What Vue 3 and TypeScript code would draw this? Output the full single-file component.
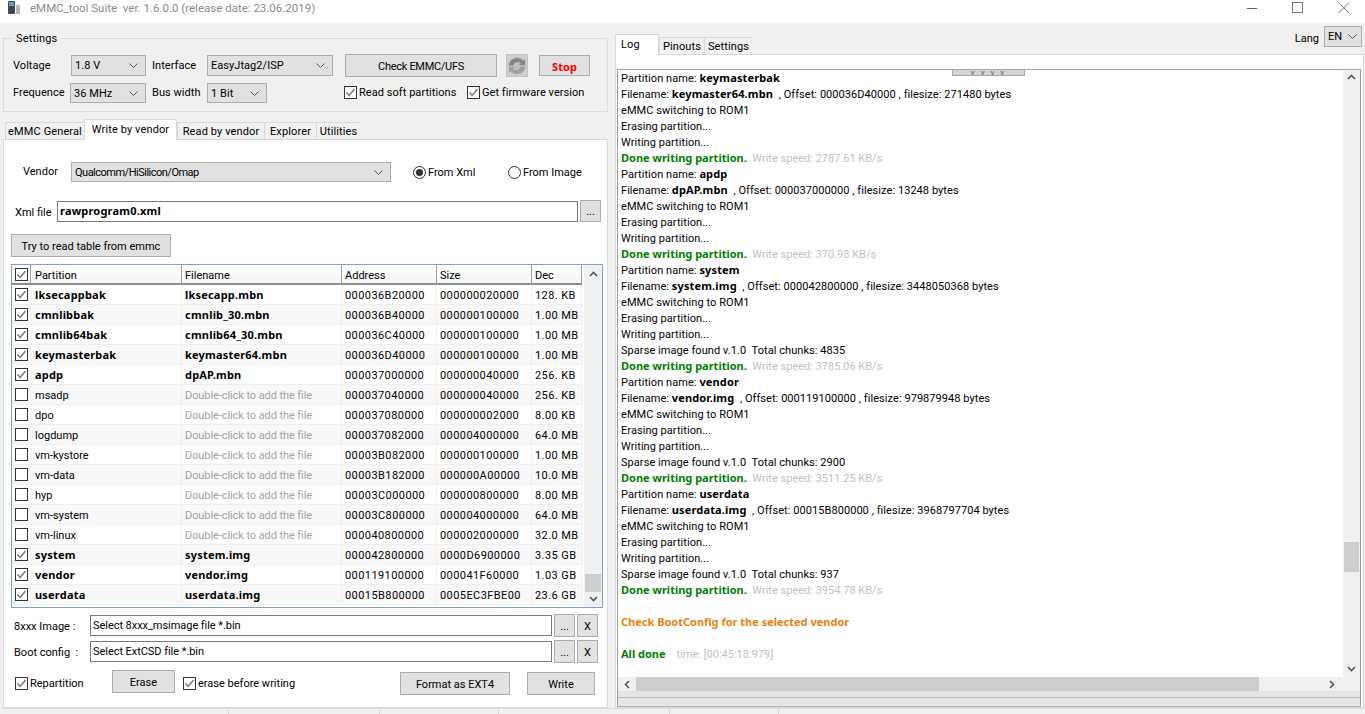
<script setup lang="ts">
interface Row { p: string; f: string; a: string; s: string; d: string; on: boolean }
const hint = 'Double-click to add the file'
const rows: Row[] = [
  { p: 'lksecappbak', f: 'lksecapp.mbn', a: '000036B20000', s: '000000020000', d: '128. KB', on: true },
  { p: 'cmnlibbak', f: 'cmnlib_30.mbn', a: '000036B40000', s: '000000100000', d: '1.00 MB', on: true },
  { p: 'cmnlib64bak', f: 'cmnlib64_30.mbn', a: '000036C40000', s: '000000100000', d: '1.00 MB', on: true },
  { p: 'keymasterbak', f: 'keymaster64.mbn', a: '000036D40000', s: '000000100000', d: '1.00 MB', on: true },
  { p: 'apdp', f: 'dpAP.mbn', a: '000037000000', s: '000000040000', d: '256. KB', on: true },
  { p: 'msadp', f: hint, a: '000037040000', s: '000000040000', d: '256. KB', on: false },
  { p: 'dpo', f: hint, a: '000037080000', s: '000000002000', d: '8.00 KB', on: false },
  { p: 'logdump', f: hint, a: '000037082000', s: '000004000000', d: '64.0 MB', on: false },
  { p: 'vm-kystore', f: hint, a: '00003B082000', s: '000000100000', d: '1.00 MB', on: false },
  { p: 'vm-data', f: hint, a: '00003B182000', s: '000000A00000', d: '10.0 MB', on: false },
  { p: 'hyp', f: hint, a: '00003C000000', s: '000000800000', d: '8.00 MB', on: false },
  { p: 'vm-system', f: hint, a: '00003C800000', s: '000004000000', d: '64.0 MB', on: false },
  { p: 'vm-linux', f: hint, a: '000040800000', s: '000002000000', d: '32.0 MB', on: false },
  { p: 'system', f: 'system.img', a: '000042800000', s: '0000D6900000', d: '3.35 GB', on: true },
  { p: 'vendor', f: 'vendor.img', a: '000119100000', s: '000041F60000', d: '1.03 GB', on: true },
  { p: 'userdata', f: 'userdata.img', a: '00015B800000', s: '0005EC3FBE00', d: '23.6 GB', on: true }
]
type Seg = [string, string]
const block = (name: string, file: string, off: string, size: string, speed: string, sparse?: string): Seg[][] => {
  const l: Seg[][] = [
    [['r', 'Partition name: '], ['b', name]],
    [['r', 'Filename: '], ['b', file], ['r', `  , Offset: ${off} , filesize: ${size} bytes`]],
    [['r', 'eMMC switching to ROM1']],
    [['r', 'Erasing partition...']],
    [['r', 'Writing partition...']]
  ]
  if (sparse) l.push([['r', `Sparse image found v.1.0  Total chunks: ${sparse}`]])
  l.push([['g', 'Done writing partition.'], ['m', `  Write speed: ${speed} KB/s`]])
  return l
}
const log: Seg[][] = [
  ...block('keymasterbak', 'keymaster64.mbn', '000036D40000', '271480', '2787.61'),
  ...block('apdp', 'dpAP.mbn', '000037000000', '13248', '370.98'),
  ...block('system', 'system.img', '000042800000', '3448050368', '3785.06', '4835'),
  ...block('vendor', 'vendor.img', '000119100000', '979879948', '3511.25', '2900'),
  ...block('userdata', 'userdata.img', '00015B800000', '3968797704', '3954.78', '937'),
  [['r', '\u00a0']],
  [['o', 'Check BootConfig for the selected vendor']],
  [['r', '\u00a0']],
  [['g', 'All done'], ['m', '    time: [00:45:18:979]']]
]
const leftTabs = [
  { t: 'eMMC General', w: 79 }, { t: 'Write by vendor', w: 93, on: true }, { t: 'Read by vendor', w: 87 },
  { t: 'Explorer', w: 52 }, { t: 'Utilities', w: 44 }
]
const rightTabs = [{ t: 'Log', w: 44, on: true }, { t: 'Pinouts', w: 45 }, { t: 'Settings', w: 48 }]
const tick = [229, 151, 119, 171, 109]
</script>

<template>
  <div class="app">
    <svg class="defs" width="0" height="0">
      <symbol id="on" viewBox="0 0 13 13">
        <rect x=".5" y=".5" width="12" height="12" fill="#fff" stroke="#333" />
        <path d="M2.5 6.5 5.2 9.5 10.5 3" fill="none" stroke="#777" stroke-width="1.4" />
      </symbol>
      <symbol id="off" viewBox="0 0 13 13">
        <rect x=".5" y=".5" width="12" height="12" fill="#fff" stroke="#333" />
      </symbol>
      <symbol id="caret" viewBox="0 0 9 5">
        <path d="M.5.5 4.5 4.5 8.5.5" fill="none" stroke="#555" />
      </symbol>
    </svg>

    <header class="title">
      <svg class="appicon" width="14" height="15" viewBox="0 0 14 15">
        <rect x="1" y="1" width="7" height="13" rx="1" fill="#3d4a57" />
        <rect x="2" y="2" width="5" height="4" fill="#6d9cc4" />
        <rect x="9" y="5" width="4" height="9" fill="#b4b8bc" />
      </svg>
      <span>eMMC_tool Suite&nbsp; ver. 1.6.0.0 (release date: 23.06.2019)</span>
      <div class="winbtns">
        <svg width="12" height="12" viewBox="0 0 12 12"><path d="M1 6.5H11" stroke="#666" /></svg>
        <svg width="12" height="12" viewBox="0 0 12 12"><rect x=".5" y=".5" width="10" height="10" fill="none" stroke="#777" /></svg>
        <svg width="12" height="12" viewBox="0 0 12 12"><path d="M.5.5 11 11M11 .5.5 11" stroke="#777" fill="none" /></svg>
      </div>
    </header>

    <main class="main">
      <section class="left">
        <fieldset class="settings">
          <legend>Settings</legend>
          <div class="setgrid">
            <label>Voltage</label>
            <div class="sel"><span>1.8 V</span><svg class="car"><use href="#caret" /></svg></div>
            <label class="gapl">Interface</label>
            <div class="sel"><span>EasyJtag2/ISP</span><svg class="car"><use href="#caret" /></svg></div>
            <div class="btn check">Check EMMC/UFS</div>
            <div class="refresh">
              <svg width="20" height="20" viewBox="0 0 20 20">
                <circle cx="10" cy="10" r="9" fill="#bdbdbd" />
                <path d="M2 9A8 8 0 0 1 16 5L18 3V9H12L14 7A5 5 0 0 0 6 10Z" fill="#858585" />
                <path d="M18 11A8 8 0 0 1 4 15L2 17V11H8L6 13A5 5 0 0 0 14 10Z" fill="#a0a0a0" />
              </svg>
            </div>
            <div class="btn stop">Stop</div>

            <label class="low">Frequence</label>
            <div class="sel freq"><span>36 MHz</span><svg class="car"><use href="#caret" /></svg></div>
            <label class="gapl low">Bus width</label>
            <div class="sel bus"><span>1 Bit</span><svg class="car"><use href="#caret" /></svg></div>
            <div class="checks">
              <span class="chk first"><svg class="box"><use href="#on" /></svg>Read soft partitions</span>
              <span class="chk"><svg class="box"><use href="#on" /></svg>Get firmware version</span>
            </div>
          </div>
        </fieldset>

        <nav class="tabs ltabs">
          <div v-for="t in leftTabs" :key="t.t" class="tab" :class="{ on: t.on }" :style="{ width: t.w + 'px' }">{{ t.t }}</div>
        </nav>

        <div class="panel lpanel">
          <div class="vendor">
            <label class="vlabel">Vendor</label>
            <div class="sel vsel"><span>Qualcomm/HiSilicon/Omap</span><svg class="car"><use href="#caret" /></svg></div>
            <span class="radio r1"><i class="dot on"></i>From Xml</span>
            <span class="radio r2"><i class="dot"></i>From Image</span>
          </div>
          <div class="xml">
            <label class="xlabel">Xml file</label>
            <div class="field bold">rawprogram0.xml</div>
            <div class="btn mini">...</div>
          </div>
          <div class="btn tryb">Try to read table from emmc</div>

          <div class="table">
            <div class="list">
              <div class="tr head">
                <div class="td cbc"><svg class="box"><use href="#on" /></svg></div>
                <div class="td">Partition</div><div class="td">Filename</div>
                <div class="td">Address</div><div class="td">Size</div><div class="td">Dec</div>
              </div>
              <div v-for="r in rows" :key="r.p" class="tr">
                <div class="td cbc"><svg class="box"><use :href="r.on ? '#on' : '#off'" /></svg></div>
                <div class="td" :class="{ bold: r.on }">{{ r.p }}</div>
                <div class="td" :class="r.on ? 'bold' : 'hint'">{{ r.f }}</div>
                <div class="td num">{{ r.a }}</div><div class="td num">{{ r.s }}</div><div class="td num">{{ r.d }}</div>
              </div>
            </div>
            <div class="vbar tbar">
              <svg class="arrow" viewBox="0 0 9 6"><path d="M1 5 4.5 1.5 8 5" fill="none" stroke="#555" stroke-width="1.6" /></svg>
              <div class="tthumb"></div>
              <svg class="arrow" viewBox="0 0 9 6"><path d="M1 1 4.5 4.5 8 1" fill="none" stroke="#555" stroke-width="1.6" /></svg>
            </div>
          </div>

          <div class="filerow">
            <label class="flabel">8xxx Image :</label>
            <div class="field plain">Select 8xxx_msimage file *.bin</div>
            <div class="btn mini">...</div><div class="btn mini">X</div>
          </div>
          <div class="filerow second">
            <label class="flabel">Boot config&nbsp; :</label>
            <div class="field plain">Select ExtCSD file *.bin</div>
            <div class="btn mini">...</div><div class="btn mini">X</div>
          </div>

          <div class="actions">
            <span class="chk rep"><svg class="box"><use href="#on" /></svg>Repartition</span>
            <div class="btn erase">Erase</div>
            <span class="chk ebw"><svg class="box"><use href="#on" /></svg>erase before writing</span>
            <div class="btn fmt">Format as EXT4</div>
            <div class="btn write">Write</div>
          </div>
        </div>
      </section>

      <section class="right">
        <nav class="tabs rtabs">
          <div v-for="t in rightTabs" :key="t.t" class="tab" :class="{ on: t.on }" :style="{ width: t.w + 'px' }">{{ t.t }}</div>
          <div class="lang">
            <label>Lang</label>
            <div class="sel lsel"><span>EN</span><svg class="car"><use href="#caret" /></svg></div>
          </div>
        </nav>
        <div class="panel rpanel">
          <div class="logbox">
            <div class="handle">v v v v</div>
            <div class="logmain">
              <div class="logtext">
                <div v-for="(l, i) in log" :key="i" class="ln">
                  <span v-for="(s, j) in l" :key="j" :class="s[0]">{{ s[1] }}</span>
                </div>
              </div>
              <div class="vbar lbar">
                <svg class="arrow" viewBox="0 0 9 6"><path d="M1 5 4.5 1.5 8 5" fill="none" stroke="#555" stroke-width="1.6" /></svg>
                <div class="lthumb"></div>
                <svg class="arrow" viewBox="0 0 9 6"><path d="M1 1 4.5 4.5 8 1" fill="none" stroke="#555" stroke-width="1.6" /></svg>
              </div>
            </div>
            <div class="hbar">
              <svg class="harrow" viewBox="0 0 6 9"><path d="M5 1 1.5 4.5 5 8" fill="none" stroke="#555" stroke-width="1.6" /></svg>
              <div class="hthumb"></div>
              <svg class="harrow next" viewBox="0 0 6 9"><path d="M1 1 4.5 4.5 1 8" fill="none" stroke="#555" stroke-width="1.6" /></svg>
            </div>
            <div class="strip"></div>
          </div>
        </div>
      </section>
    </main>

    <footer class="status">
      <div v-for="(w, i) in tick" :key="i" class="cell" :style="{ width: w + 'px' }"></div>
    </footer>
  </div>
</template>

<style>
html, body { margin: 0; overflow: hidden; }
</style>

<style scoped>
.app { width: 1365px; height: 714px; display: flex; flex-direction: column; background: #f0f0f0; overflow: hidden; font: 11px/13px Roboto, "Noto Sans", sans-serif; color: #000; }
.defs { position: absolute; }
.title { height: 23px; flex: none; background: #fff; display: flex; align-items: center; color: #8b8b8b; font-size: 11.5px; padding: 0 0 7px 7px; box-sizing: border-box; }
.appicon { margin-right: 9px; margin-top: -1px; }
.winbtns { margin-left: auto; display: flex; gap: 34px; padding-right: 15px; margin-top: -1px; }
.main { height: 685px; flex: none; display: flex; padding: 9px 0 0 3px; box-sizing: border-box; gap: 7px; }
.left { width: 605px; display: flex; flex-direction: column; }
.settings { margin: 0; padding: 10px 0 0 9px; border: 1px solid #dcdcdc; height: 80px; box-sizing: border-box; min-width: 0; }
.settings legend { margin-left: -1px; padding: 0 4px; line-height: 13px; letter-spacing: .15px; }
.setgrid { display: grid; grid-template-columns: 58px 75px 61px 126px 152px 22px 51px; grid-template-rows: 21px 20px; row-gap: 7px; align-items: center; letter-spacing: .05px; }
.setgrid label.low { margin-bottom: 2px; }
.gapl { margin-left: 6px; }
.sel { height: 100%; min-height: 20px; box-sizing: border-box; background: #e1e1e1; border: 1px solid #adadad; display: flex; align-items: center; padding: 0 5px 0 3px; justify-content: space-between; }
.car { width: 9px; height: 5px; flex: none; margin-right: 2px; }
.freq { margin-left: -1px; }
.bus { width: 60px; }
.btn { background: #e1e1e1; border: 1px solid #adadad; box-sizing: border-box; display: flex; align-items: center; justify-content: center; padding-top: 1px; }
.check { height: 23px; margin-left: 12px; margin-right: -12px; letter-spacing: -.3px; }
.refresh { width: 22px; height: 23px; background: #cfcfcf; border: 1px solid #c4c4c4; box-sizing: border-box; display: flex; align-items: center; justify-content: center; margin-left: 21px; }
.stop { color: #f00; font-weight: 700; font-family: "Noto Sans", sans-serif; height: 21px; width: 51px; margin-left: 32px; }
.checks { grid-column: 5 / 8; display: flex; margin-left: 11px; margin-bottom: 1px; }
.first { width: 123px; flex: none; }
.chk { display: inline-flex; align-items: center; gap: 2px; white-space: nowrap; flex: none; }
.box { width: 13px; height: 13px; flex: none; display: block; }
.tabs { display: flex; align-items: flex-end; }
.ltabs { height: 21px; margin-top: 7px; padding-left: 2px; margin-bottom: -1px; position: relative; z-index: 1; }
.tab { height: 18px; box-sizing: border-box; background: #f0f0f0; border: 1px solid #d9d9d9; border-right-width: 0; text-align: center; line-height: 18px; letter-spacing: .12px; }
.tab.on { height: 21px; background: #fff; border-right-width: 1px; border-bottom: 0; line-height: 19px; }
.rtabs .tab.on { text-align: left; padding-left: 5px; }
.panel { background: #fff; border: 1px solid #d9d9d9; box-sizing: border-box; }
.lpanel { height: 569px; padding: 22px 0 0 7px; display: flex; flex-direction: column; }
.vendor { height: 20px; display: flex; align-items: center; }
.vlabel { width: 48px; padding-left: 12px; flex: none; margin-bottom: 2px; }
.vsel { width: 320px; flex: none; letter-spacing: -.5px; }
.radio { display: inline-flex; align-items: center; gap: 2px; }
.r1 { margin-left: 22px; width: 95px; }
.dot { width: 13px; height: 13px; border: 1px solid #333; border-radius: 50%; box-sizing: border-box; position: relative; display: block; background: #fff; }
.dot.on::after { content: ""; position: absolute; inset: 2px; border-radius: 50%; background: #333; }
.xml { height: 22px; margin-top: 18px; display: flex; align-items: center; }
.xlabel { width: 46px; padding: 2px 0 0 4px; box-sizing: border-box; flex: none; }
.field { height: 21px; box-sizing: border-box; border: 1px solid #7a7a7a; background: #fff; flex: none; width: 521px; display: flex; align-items: center; padding: 0 2px 2px; }
.plain { padding-bottom: 0; letter-spacing: -.05px; }
.bold { font-weight: 700; font-family: "Noto Sans", sans-serif; letter-spacing: .2px; }
.mini { width: 21px; height: 22px; margin-left: 2px; flex: none; }
.tryb { width: 160px; height: 23px; margin-top: 12px; }
.table { width: 592px; height: 344px; margin-top: 7px; box-sizing: border-box; border: 1px solid #84a3c4; display: flex; justify-content: space-between; }
.list { width: 571px; }
.tr { display: grid; grid-template-columns: 19px 151px 160px 95px 95px 50px; height: 20px; background: #fff; }
.tr:nth-child(odd) { background: #f8f8f8; }
.td { border-right: 1px solid #efefef; border-bottom: 1px solid #efefef; padding: 2px 0 0 3px; display: flex; align-items: center; box-sizing: border-box; white-space: nowrap; overflow: hidden; }
.td:nth-child(2) { padding-left: 4px; }
.td.bold, .td.cbc { padding-top: 0; }
.td.cbc { padding-left: 3px; }
.num { letter-spacing: .42px; }
.head { background: linear-gradient(#fff, #f4f4f4) !important; }
.head .td { border-right: 1px solid #a0a0a0; border-bottom: 2px solid #8f8f8f; }
.hint { color: #a3a3a3; letter-spacing: -.08px; }
.vbar { background: #f0f0f0; display: flex; flex-direction: column; align-items: center; flex: none; }
.arrow { width: 9px; height: 6px; flex: none; }
.tbar { width: 18px; padding: 6px 0 5px; box-sizing: border-box; }
.tthumb { width: 16px; height: 18px; background: #cdcdcd; margin-top: 297px; margin-bottom: 4px; }
.filerow { display: flex; align-items: center; height: 23px; margin-top: 6px; }
.second { margin-top: 3px; }
.flabel { width: 79px; padding: 2px 0 0 3px; box-sizing: border-box; flex: none; }
.filerow .field { width: 462px; }
.filerow .mini { height: 23px; margin-left: 2px; }
.actions { display: flex; height: 25px; margin-top: 7px; align-items: flex-start; }
.rep { margin: 7px 0 0 4px; width: 97px; }
.erase { width: 63px; height: 23px; }
.ebw { margin: 7px 0 0 8px; width: 217px; }
.fmt { width: 110px; height: 23px; margin-top: 2px; }
.write { width: 68px; height: 23px; margin: 2px 0 0 17px; }
.right { width: 749px; display: flex; flex-direction: column; margin-top: 2px; }
.rtabs { height: 21px; margin-bottom: -1px; position: relative; z-index: 1; }
.lang { margin-left: auto; align-self: flex-start; display: flex; align-items: center; gap: 5px; margin-top: -8px; margin-right: 2px; height: 21px; }
.lang label { padding-top: 3px; }
.lsel { width: 38px; height: 21px; padding: 0 3px 1px; }
.lsel .car { margin-right: 1px; }
.rpanel { height: 654px; padding: 14px 2px 0 1px; }
.logbox { position: relative; height: 638px; box-sizing: border-box; border: 1px solid #a0a0a0; border-bottom-color: #b5b5b5; display: flex; flex-direction: column; }
.handle { position: absolute; top: -1px; left: 334px; width: 73px; height: 7px; box-sizing: border-box; background: #d4d4d4; border: 1px solid #a8a8a8; text-align: center; font-size: 8px; line-height: 5px; letter-spacing: 2px; color: #555; }
.logmain { height: 607px; display: flex; flex: none; }
.logtext { flex: 1; background: #fff; padding: 0 0 0 3px; overflow: hidden; }
.ln { height: 16px; line-height: 16px; white-space: pre; font-family: "Noto Sans", sans-serif; }
.r { font-family: Roboto, sans-serif; letter-spacing: .06px; }
.b { font-weight: 700; letter-spacing: .15px; }
.g { font-weight: 700; color: #008000; }
.o { font-weight: 700; color: #e8820c; }
.m { font-family: Roboto, sans-serif; color: #c2c2c2; }
.lbar { width: 17px; padding: 4px 0 5px; box-sizing: border-box; }
.lthumb { width: 15px; height: 30px; background: #cdcdcd; margin-top: 462px; margin-bottom: auto; }
.hbar { height: 14px; flex: none; background: #f0f0f0; display: flex; align-items: center; }
.harrow { width: 6px; height: 9px; flex: none; margin-left: 6px; }
.hthumb { width: 623px; height: 14px; background: #cdcdcd; margin-left: 6px; }
.next { margin-left: auto; margin-right: 25px; }
.strip { flex: 1; background: #e6e6e6; border-top: 1px solid #e2e2e2; box-shadow: inset 0 5px 0 #e6e6e6, inset 0 6px 0 #bdbdbd; }
.status { flex: 1; display: flex; border-top: 1px solid #dfdfdf; background: #f0f0f0; }
.cell { height: 100%; box-sizing: border-box; border-right: 1px solid #d5d5d5; }
</style>
